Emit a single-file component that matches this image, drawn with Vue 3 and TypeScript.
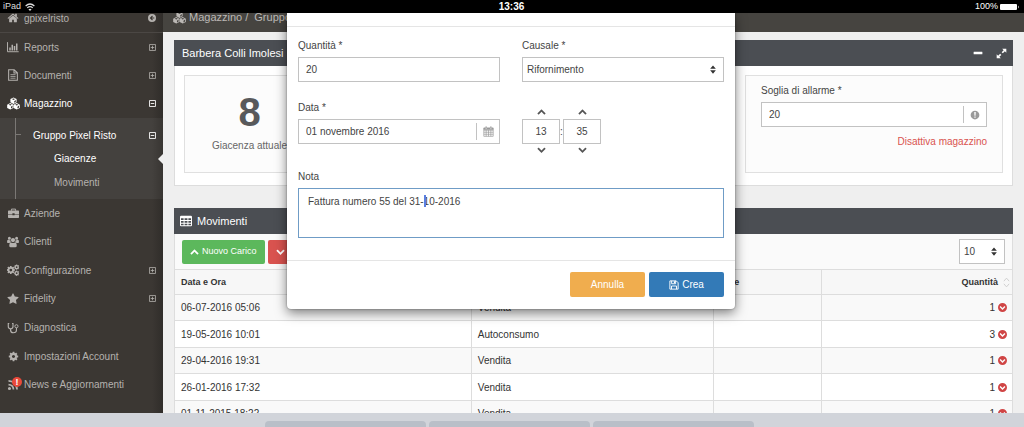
<script setup lang="ts">
import { h, ref } from 'vue'

interface Shape {
  d: string
  stroke?: number
  transform?: string
}
interface Glyph {
  box: string
  shapes: Shape[]
}

const cube = (x: number, y: number, r: number): string => {
  const w = r * 0.95
  const k = r / 2
  return (
    `M${x} ${y - r}L${x + w} ${y - k}V${y + k}L${x} ${y + r}L${x - w} ${y + k}V${y - k}Z` +
    `M${x} ${y - r + 1.2}L${x - w + 1.8} ${y - k}L${x} ${y - 0.9}L${x + w - 1.8} ${y - k}Z` +
    `M${x + 0.9} ${y + 0.6}V${y + r - 1.5}L${x + w - 1} ${y + k - 0.5}V${y - k + 1.1}Z`
  )
}

const cog =
  'M1152 896q0-106-75-181t-181-75-181 75-75 181 75 181 181 75 181-75 75-181zm512-109v222q0 12-8 23t-20 13l-185 28q-19 54-39 91 35 50 107 138 10 12 10 25t-9 23q-27 37-99 108t-94 71q-12 0-26-9l-138-108q-44 23-91 38-16 136-29 186-7 28-36 28h-222q-14 0-24.5-8.5t-11.5-21.5l-28-184q-49-16-90-37l-141 107q-10 9-25 9-14 0-25-11-126-114-165-168-7-10-7-23 0-12 8-23 15-21 51-66.5t54-70.5q-27-50-41-99l-183-27q-13-2-21-12.5t-8-23.5v-222q0-12 8-23t19-13l186-28q14-46 39-92-40-57-107-138-10-12-10-24 0-10 9-23 26-36 98.5-107.5t94.5-71.5q13 0 26 10l138 107q44-23 91-38 16-136 29-186 7-28 36-28h222q14 0 24.5 8.5t11.5 21.5l28 184q49 16 90 37l142-107q9-9 24-9 13 0 25 10 129 119 165 170 7 8 7 22 0 12-8 23-15 21-51 66.5t-54 70.5q26 50 41 98l183 28q13 2 21 12.5t8 23.5z'

const B = '0 0 1792 1792'
const S = '0 0 16 16'

const glyphs: Record<string, Glyph> = {
  home: { box: B, shapes: [{ d: 'M1472 992v480q0 26-19 45t-45 19h-384v-384h-256v384h-384q-26 0-45-19t-19-45v-480q0-1 .5-3t.5-3l575-474 575 474q1 2 1 6zm223-69l-62 74q-8 9-21 11h-3q-13 0-21-7l-692-577-692 577q-12 8-24 7-13-2-21-11l-62-74q-8-10-7-23.5t11-21.5l719-599q32-26 76-26t76 26l244 204v-195q0-14 9-23t23-9h192q14 0 23 9t9 23v408l219 182q10 8 11 21.5t-7 23.5z' }] },
  up: { box: B, shapes: [{ d: 'M1683 1331l-166 165q-19 19-45 19t-45-19l-531-531-531 531q-19 19-45 19t-45-19l-166-165q-19-19-19-45.5t19-45.5l742-741q19-19 45-19t45 19l742 741q19 19 19 45.5t-19 45.5z' }] },
  down: { box: B, shapes: [{ d: 'M1683 808l-742 741q-19 19-45 19t-45-19l-742-741q-19-19-19-45.5t19-45.5l166-165q19-19 45-19t45 19l531 531 531-531q19-19 45-19t45 19l166 165q19 19 19 45.5t-19 45.5z' }] },
  star: { box: B, shapes: [{ d: 'M1728 647q0 22-26 48l-363 354 86 500q1 7 1 20 0 21-10.5 35.5t-30.5 14.5q-19 0-40-12l-449-236-449 236q-22 12-40 12-21 0-31.5-14.5t-10.5-35.5q0-6 2-20l86-500-364-354q-25-27-25-48 0-37 56-46l502-73 225-455q19-41 49-41t49 41l225 455 502 73q56 9 56 46z' }] },
  cog: { box: B, shapes: [{ d: cog }] },
  cogs: {
    box: B,
    shapes: [
      { d: cog, transform: 'translate(-150 180) scale(.8)' },
      { d: cog, transform: 'translate(980 0) scale(.52)' },
      { d: cog, transform: 'translate(980 910) scale(.52)' },
    ],
  },
  chart: { box: S, shapes: [{ d: 'M.7 1.5V14.3H15.6', stroke: 1.3 }, { d: 'M3 8.5h2v4.2H3zM6 5h2v7.7H6zM9 6.8h2v5.9H9zM12 3.2h2v9.5h-2z' }] },
  doc: { box: S, shapes: [{ d: 'M2.2 1H9.6L13.8 5V15H2.2ZM9.3 1V5.4H13.8', stroke: 1.4 }, { d: 'M4.6 7.5h6.8M4.6 9.9h6.8M4.6 12.3h6.8', stroke: 1.1 }] },
  cubes: { box: S, shapes: [{ d: cube(8, 4.5, 4) + cube(4, 11.5, 4) + cube(12, 11.5, 4) }] },
  brief: { box: S, shapes: [{ d: 'M5 4V1.6H11V4', stroke: 1.4 }, { d: 'M0 4.6Q0 3.6 1 3.6H15Q16 3.6 16 4.6V8.6H9.6V7.8H6.4V8.6H0ZM0 9.5H6.4V10.6H9.6V9.5H16V13.6Q16 14.6 15 14.6H1Q0 14.6 0 13.6Z' }] },
  users: { box: S, shapes: [{ d: 'M8 2.6A2.8 2.8 0 1 1 8 8.2A2.8 2.8 0 1 1 8 2.6ZM3.2 1A2 2 0 1 1 3.2 5A2 2 0 1 1 3.2 1ZM12.8 1A2 2 0 1 1 12.8 5A2 2 0 1 1 12.8 1ZM0 8.4Q0 5 1.6 5.1Q3 6 4.6 5.5Q4.5 7.2 5.3 8.3Q3.9 8.4 3.3 9.2H1.3Q0 9.2 0 8.4ZM16 8.4Q16 5 14.4 5.1Q13 6 11.4 5.5Q11.5 7.2 10.7 8.3Q12.1 8.4 12.7 9.2H14.7Q16 9.2 16 8.4ZM3 12.9Q3 8.6 5.4 8.5Q8 10.3 10.6 8.5Q13 8.6 13 12.9Q13 15 11 15H5Q3 15 3 12.9Z' }] },
  steth: { box: S, shapes: [{ d: 'M3 2H1.7V6Q1.7 9 4.8 9Q8 9 8 6V2H6.7M4.8 9V11.2Q5 14.3 8.4 14.3Q12.6 14.3 12.6 11V7.6', stroke: 1.5 }, { d: 'M12.6 3.6A2.1 2.1 0 1 1 12.6 7.8A2.1 2.1 0 1 1 12.6 3.6Z', stroke: 1.3 }] },
  rss: { box: S, shapes: [{ d: 'M2 7.4A6.6 6.6 0 0 1 8.6 14M2 2.6A11.4 11.4 0 0 1 13.4 14', stroke: 2.4 }, { d: 'M3.3 10.5A2.1 2.1 0 1 1 3.3 14.7A2.1 2.1 0 1 1 3.3 10.5Z' }] },
  back: { box: S, shapes: [{ d: 'M8 0A8 8 0 1 1 8 16A8 8 0 1 1 8 0ZM8.2 3.2L3.4 8L8.2 12.8L9.8 11.2L7.8 9.2H12.6V6.8H7.8L9.8 4.8Z' }] },
  plus: { box: S, shapes: [{ d: 'M1.2 1.2H14.8V14.8H1.2ZM8 4V12M4 8H12', stroke: 1.8 }] },
  minus: { box: S, shapes: [{ d: 'M1.2 1.2H14.8V14.8H1.2ZM4 8H12', stroke: 2 }] },
  table: { box: S, shapes: [{ d: 'M1.5 1H14.5Q16 1 16 2.5V13.5Q16 15 14.5 15H1.5Q0 15 0 13.5V2.5Q0 1 1.5 1ZM1.3 4.3V6.7H4.8V4.3ZM6.1 4.3V6.7H9.9V4.3ZM11.2 4.3V6.7H14.7V4.3ZM1.3 7.9V10.3H4.8V7.9ZM6.1 7.9V10.3H9.9V7.9ZM11.2 7.9V10.3H14.7V7.9ZM1.3 11.5V13.8H4.8V11.5ZM6.1 11.5V13.8H9.9V11.5ZM11.2 11.5V13.8H14.7V11.5Z' }] },
  dash: { box: S, shapes: [{ d: 'M1.5 6H14.5Q15 6 15 6.5V9.5Q15 10 14.5 10H1.5Q1 10 1 9.5V6.5Q1 6 1.5 6Z' }] },
  expand: { box: S, shapes: [{ d: 'M9 1H15V7L12.9 4.9L10 7.8L8.2 6L11.1 3.1ZM7 15H1V9L3.1 11.1L6 8.2L7.8 10L4.9 12.9Z' }] },
  info: { box: S, shapes: [{ d: 'M8 1A7 7 0 1 1 8 15A7 7 0 1 1 8 1ZM6.8 3.2L7.1 9.2H8.9L9.2 3.2ZM7 10.3V12.4H9V10.3Z' }] },
  calendar: { box: S, shapes: [{ d: 'M1.2 3H14.8V15H1.2ZM1.2 6.2H14.8M1.2 9.1H14.8M1.2 12H14.8M4.6 6V15M8 6V15M11.4 6V15', stroke: 1 }, { d: 'M1 2.6H15V5.6H1ZM3.6 .6H5.6V4H3.6ZM10.4 .6H12.4V4H10.4Z' }] },
  save: { box: S, shapes: [{ d: 'M1.4 1.4H11.6L14.6 4.4V14.6H1.4ZM4 14.6V9.6H12V14.6M4.2 1.4V6H10.6V1.4', stroke: 1.5 }, { d: 'M7.8 2H9.6V5.2H7.8Z' }] },
  out: { box: S, shapes: [{ d: 'M8 0A8 8 0 1 1 8 16A8 8 0 1 1 8 0ZM8 12.4L13.2 7.2L11.4 5.4L8 8.8L4.6 5.4L2.8 7.2Z' }] },
  arrows: { box: '0 0 8 12', shapes: [{ d: 'M4 .5L7.8 5H.2ZM4 11.5L7.8 7H.2Z' }] },
  sort: { box: '0 0 8 12', shapes: [{ d: 'M1 4.5L4 1L7 4.5M1 7.5L4 11L7 7.5', stroke: 1 }] },
  wifi: { box: S, shapes: [{ d: 'M1 6.4Q8 0 15 6.4M3.6 9.4Q8 5.4 12.4 9.4', stroke: 2 }, { d: 'M8 14.4L5.4 11.6Q8 9.6 10.6 11.6Z' }] },
  battery: { box: '0 0 20 8', shapes: [{ d: 'M1 1H16Q17 1 17 2V6Q17 7 16 7H1Q0 7 0 6V2Q0 1 1 1ZM18 2.6Q19.4 4 18 5.4Z' }] },
}

const Icon = (props: { name: string; w: number; hgt?: number }) => {
  const g = glyphs[props.name]
  return h(
    'svg',
    { viewBox: g.box, width: props.w, height: props.hgt ?? props.w, 'aria-hidden': 'true', class: 'glyph' },
    g.shapes.map((s) =>
      h('path', {
        d: s.d,
        transform: s.transform,
        fill: s.stroke ? 'none' : 'currentColor',
        'fill-rule': 'evenodd',
        stroke: s.stroke ? 'currentColor' : undefined,
        'stroke-width': s.stroke,
      }),
    ),
  )
}
Icon.props = ['name', 'w', 'hgt']

interface NavItem {
  label: string
  icon: string
  toggle?: 'plus' | 'minus'
  active?: boolean
  alert?: boolean
}
const topNav: NavItem[] = [
  { label: 'Reports', icon: 'chart', toggle: 'plus' },
  { label: 'Documenti', icon: 'doc', toggle: 'plus' },
  { label: 'Magazzino', icon: 'cubes', toggle: 'minus', active: true },
]
const bottomNav: NavItem[] = [
  { label: 'Aziende', icon: 'brief' },
  { label: 'Clienti', icon: 'users' },
  { label: 'Configurazione', icon: 'cogs', toggle: 'plus' },
  { label: 'Fidelity', icon: 'star', toggle: 'plus' },
  { label: 'Diagnostica', icon: 'steth' },
  { label: 'Impostazioni Account', icon: 'cog' },
  { label: 'News e Aggiornamenti', icon: 'rss', alert: true },
]

const rows = [
  { date: '06-07-2016 05:06', cause: 'Vendita', qty: 1 },
  { date: '19-05-2016 10:01', cause: 'Autoconsumo', qty: 3 },
  { date: '29-04-2016 19:31', cause: 'Vendita', qty: 1 },
  { date: '26-01-2016 17:32', cause: 'Vendita', qty: 1 },
  { date: '01-11-2015 18:22', cause: 'Vendita', qty: 1 },
]

const threshold = ref('20')
const quantity = ref('20')
const cause = ref('Rifornimento')
const date = ref('01 novembre 2016')
const hour = ref('13')
const minute = ref('35')
const note = ref('Fattura numero 55 del 31-10-2016')
const pageSize = ref('10')
</script>

<template>
  <div class="screen">
    <header class="status">
      <span class="status-side">iPad <Icon name="wifi" :w="10" /></span>
      <strong>13:36</strong>
      <span class="status-side end">100% <Icon name="battery" :w="20" :hgt="8" /></span>
    </header>

    <div class="view">
      <nav class="sidebar">
        <a href="#" class="nav-item account">
          <span class="nav-icon"><Icon name="home" :w="12" /></span>
          <span class="nav-label">gpixelristo</span>
          <Icon name="back" :w="8" />
        </a>
        <div class="nav-group top">
          <a v-for="n in topNav" :key="n.label" href="#" class="nav-item" :class="{ active: n.active }">
            <span class="nav-icon"><Icon :name="n.icon" :w="n.icon === 'cubes' ? 13 : 12" /></span>
            <span class="nav-label">{{ n.label }}</span>
            <Icon v-if="n.toggle" :name="n.toggle" :w="7" />
          </a>
        </div>
        <div class="subnav">
          <a href="#" class="sub-item level1 active"><span class="nav-label">Gruppo Pixel Risto</span><Icon name="minus" :w="7" /></a>
          <a href="#" class="sub-item level2 active current">Giacenze</a>
          <a href="#" class="sub-item level2">Movimenti</a>
        </div>
        <div class="nav-group bottom">
          <a v-for="n in bottomNav" :key="n.label" href="#" class="nav-item">
            <span class="nav-icon">
              <Icon :name="n.icon" :w="n.icon === 'brief' || n.icon === 'cog' ? 11 : 12" />
              <span v-if="n.alert" class="alert">!</span>
            </span>
            <span class="nav-label">{{ n.label }}</span>
            <Icon v-if="n.toggle" :name="n.toggle" :w="7" />
          </a>
        </div>
      </nav>

      <main class="main">
        <div class="crumbs">
          <Icon name="cubes" :w="13" />
          <span>Magazzino /</span>
          <span class="crumb-last">Gruppo Pixel Risto</span>
        </div>

        <section class="panel">
          <div class="panel-head">
            <h2 class="plain">Barbera Colli Imolesi</h2>
            <button type="button" class="tool" aria-label="Riduci"><Icon name="dash" :w="10" /></button>
            <button type="button" class="tool" aria-label="Espandi"><Icon name="expand" :w="11" /></button>
          </div>
          <div class="cards">
            <div class="card stock">
              <strong>8</strong>
              <span>Giacenza attuale</span>
            </div>
            <div class="card threshold">
              <label for="threshold">Soglia di allarme *</label>
              <div class="field">
                <input id="threshold" v-model="threshold" type="text" />
                <span class="addon"><Icon name="info" :w="10" /></span>
              </div>
              <a href="#" class="danger">Disattiva magazzino</a>
            </div>
          </div>
        </section>

        <section class="panel">
          <div class="panel-head">
            <Icon name="table" :w="12" />
            <h2>Movimenti</h2>
          </div>
          <div class="toolbar">
            <button type="button" class="btn green"><Icon name="up" :w="9" />Nuovo Carico</button>
            <button type="button" class="btn red"><Icon name="down" :w="9" />Nuovo Scarico</button>
            <div class="select small">
              <select v-model="pageSize" aria-label="Righe per pagina"><option>10</option></select>
              <span class="select-arrows"><Icon name="arrows" :w="6" :hgt="9" /></span>
            </div>
          </div>
          <table>
            <colgroup><col class="c1" /><col class="c2" /><col class="c3" /><col /></colgroup>
            <thead>
              <tr>
                <th>Data e Ora</th>
                <th>Causale</th>
                <th>Note</th>
                <th><span class="qty head">Quantità <i><Icon name="sort" :w="7" :hgt="11" /></i></span></th>
              </tr>
            </thead>
            <tbody>
              <tr v-for="r in rows" :key="r.date">
                <td>{{ r.date }}</td>
                <td>{{ r.cause }}</td>
                <td></td>
                <td><span class="qty">{{ r.qty }} <b><Icon name="out" :w="9" /></b></span></td>
              </tr>
            </tbody>
          </table>
        </section>
      </main>

      <div class="overlay">
        <form class="modal" role="dialog" aria-label="Nuovo Carico" @submit.prevent>
          <div class="modal-head"></div>
          <div class="modal-body">
            <div>
              <label for="qty">Quantità *</label>
              <div class="field"><input id="qty" v-model="quantity" type="text" /></div>
            </div>
            <div>
              <label for="cause">Causale *</label>
              <div class="select">
                <select id="cause" v-model="cause"><option>Rifornimento</option></select>
                <span class="select-arrows"><Icon name="arrows" :w="6" :hgt="9" /></span>
              </div>
            </div>
            <div>
              <label for="date">Data *</label>
              <div class="field">
                <input id="date" v-model="date" type="text" />
                <button type="button" class="addon" aria-label="Apri calendario"><Icon name="calendar" :w="11" /></button>
              </div>
            </div>
            <div class="time">
              <div class="spin">
                <button type="button" aria-label="Ora successiva"><Icon name="up" :w="9" /></button>
                <input v-model="hour" type="text" aria-label="Ora" />
                <button type="button" aria-label="Ora precedente"><Icon name="down" :w="9" /></button>
              </div>
              <span class="colon">:</span>
              <div class="spin">
                <button type="button" aria-label="Minuto successivo"><Icon name="up" :w="9" /></button>
                <input v-model="minute" type="text" aria-label="Minuti" />
                <button type="button" aria-label="Minuto precedente"><Icon name="down" :w="9" /></button>
              </div>
            </div>
            <div class="wide">
              <label for="note">Nota</label>
              <div class="note">
                <textarea id="note" v-model="note"></textarea>
                <span class="caret"></span>
              </div>
            </div>
          </div>
          <div class="modal-foot">
            <button type="button" class="action orange">Annulla</button>
            <button type="submit" class="action blue"><Icon name="save" :w="10" />Crea</button>
          </div>
        </form>
      </div>
    </div>

    <footer class="keyboard"><span></span><span></span><span></span></footer>
  </div>
</template>

<style>
body {
  margin: 0;
  overflow: hidden;
}
.glyph {
  display: block;
  flex: none;
}
</style>

<style scoped>
* {
  box-sizing: border-box;
}
.screen {
  display: flex;
  flex-direction: column;
  height: 100vh;
  overflow: hidden;
  background: #efefef;
  color: #444;
  font: 10px/13px "Liberation Sans", Arial, sans-serif;
}
button,
input,
select,
textarea {
  margin: 0;
  padding: 0;
  border: 0;
  border-radius: 0;
  outline: 0;
  background: none;
  color: inherit;
  font: inherit;
}
a {
  color: inherit;
  text-decoration: none;
}
.status {
  display: flex;
  align-items: center;
  flex: none;
  height: 13px;
  padding: 0 4px 0 3px;
  background: #000;
  color: #fff;
}
.status-side {
  display: flex;
  flex: 1;
  align-items: center;
  gap: 4px;
  color: #ddd;
  font-size: 9px;
}
.status-side.end {
  justify-content: flex-end;
  gap: 2px;
  color: #fff;
}
.view {
  position: relative;
  display: flex;
  flex: 1;
  min-height: 0;
  overflow: hidden;
}

/* Sidebar */
.sidebar {
  flex: none;
  width: 163px;
  margin-top: -9px;
  background: linear-gradient(to right, #3b3733 152px, #302d2a);
  color: #b5b2af;
}
.nav-item {
  display: flex;
  align-items: center;
  padding: 0 7px 0 6px;
}
.account {
  height: 29px;
  border-bottom: 1px solid #4b4744;
}
.nav-icon {
  position: relative;
  display: flex;
  justify-content: center;
  width: 14px;
  margin-right: 4px;
}
.nav-label {
  flex: 1;
}
.nav-group {
  display: grid;
  grid-auto-rows: 1fr;
}
.nav-group.top {
  height: 85px;
}
.nav-group.bottom {
  height: 200px;
}
.active {
  color: #fff;
}
.subnav {
  position: relative;
  display: grid;
  grid-auto-rows: 1fr;
  height: 81px;
  padding: 6px 0 5px;
  background: linear-gradient(to right, #44413e 152px, #383532);
}
.subnav::before {
  content: "";
  position: absolute;
  top: 0;
  bottom: 0;
  left: 15px;
  border-left: 1px solid #7b7875;
}
.subnav::after {
  content: "";
  position: absolute;
  top: 16px;
  left: 16px;
  width: 5px;
  border-top: 1px solid #7b7875;
}
.sub-item {
  position: relative;
  display: flex;
  align-items: center;
  padding-right: 7px;
}
.level1 {
  padding-left: 33px;
}
.level2 {
  padding-left: 54px;
}
.current::after {
  content: "";
  position: absolute;
  right: 0;
  border: 5px solid transparent;
  border-left-width: 0;
  border-right-color: #efefef;
}
.alert {
  position: absolute;
  top: -2px;
  left: 6px;
  width: 10px;
  height: 10px;
  border-radius: 50%;
  background: #e8493a;
  color: #fff;
  font-size: 9px;
  font-weight: bold;
  line-height: 10px;
  text-align: center;
}

/* Page */
.main {
  flex: 1;
  min-width: 0;
  margin-top: -9px;
}
.crumbs {
  display: flex;
  align-items: center;
  gap: 3px;
  height: 28px;
  padding: 0 10px 2px;
  background: #464440;
  color: #bbb8b5;
  font-size: 11px;
}
.crumb-last {
  margin-left: 3px;
}
.panel {
  margin: 8px 11px 22px;
  border: 1px solid #ddd;
  border-top: 0;
  background: #fff;
}
.panel-head {
  display: flex;
  align-items: center;
  gap: 5px;
  height: 26px;
  margin: 0 -1px;
  padding: 0 6px;
  background: #4b4e53;
  color: #fff;
}
.panel-head h2 {
  flex: 1;
  margin: 0;
  font-size: 11px;
  font-weight: normal;
}
.panel-head .plain {
  padding-left: 2px;
}
.panel-head h2 + .tool {
  margin-right: 8px;
}
.cards {
  display: flex;
  justify-content: space-between;
  padding: 9px 9px 12px;
}
.card {
  height: 98px;
  border: 1px solid #e0e0e0;
  background: #fcfcfc;
}
.stock {
  display: flex;
  flex-direction: column;
  align-items: center;
  width: 131px;
  padding-top: 16px;
  color: #666;
  white-space: nowrap;
}
.stock strong {
  margin-bottom: 7px;
  color: #58595b;
  font-size: 40px;
  line-height: 40px;
}
.threshold {
  width: 258px;
  padding: 8px 15px;
}
label {
  display: block;
  margin-bottom: 5px;
}
.threshold .danger {
  display: block;
  margin-top: 8px;
  color: #d9534f;
  font-size: 10px;
  text-align: right;
}
.field {
  display: flex;
  align-items: center;
  height: 25px;
  border: 1px solid #c2c2c2;
  background: #fff;
}
.field input {
  flex: 1;
  min-width: 0;
  height: 100%;
  padding: 0 7px;
}
.addon {
  display: flex;
  align-items: center;
  justify-content: center;
  width: 23px;
  height: 17px;
  border-left: 1px solid #c2c2c2;
  color: #999;
}
.toolbar {
  display: flex;
  align-items: center;
  gap: 3px;
  height: 35px;
  padding: 0 7px;
  background: #fafafa;
}
.btn {
  display: flex;
  align-items: center;
  gap: 3px;
  height: 24px;
  padding: 0 8px;
  border-radius: 2px;
  color: #fff;
  font-size: 9px;
}
.green {
  background: #5cb85c;
}
.red {
  background: #d9534f;
}
.select {
  position: relative;
  height: 25px;
}
.select select {
  width: 100%;
  height: 100%;
  padding-left: 4px;
  border: 1px solid #c2c2c2;
  background: #fff;
  appearance: none;
}
.select-arrows {
  position: absolute;
  top: 8px;
  right: 8px;
  color: #333;
  pointer-events: none;
}
.select.small {
  width: 46px;
  margin-left: auto;
}
table {
  width: 100%;
  height: 157px;
  border-collapse: collapse;
  table-layout: fixed;
  color: #333;
}
.c1 {
  width: 35.4%;
}
.c2 {
  width: 28.9%;
}
.c3 {
  width: 13%;
}
th,
td {
  padding: 0 5px 0 6px;
  border-top: 1px solid #ddd;
  border-left: 1px solid #ddd;
  text-align: left;
}
th {
  height: 25px;
  border-left: 0;
  background: #f7f7f7;
  font-size: 9px;
}
th:last-child {
  border-left: 1px solid #ddd;
}
td:first-child {
  border-left: 0;
}
tbody tr:nth-child(odd) {
  background: #f9f9f9;
}
.qty {
  display: flex;
  align-items: center;
  justify-content: flex-end;
  gap: 3px;
}
.qty b {
  color: #d04545;
}
.qty i {
  color: #ccc;
}
.qty.head {
  gap: 5px;
  margin-right: -3px;
}

/* Dialog */
.overlay {
  position: absolute;
  inset: 0 2px 0 0;
  display: flex;
  align-items: flex-start;
  justify-content: center;
}
.modal {
  width: 448px;
  max-width: 100%;
  border-radius: 0 0 4px 4px;
  background: #fff;
  box-shadow: 0 4px 12px rgba(0, 0, 0, 0.5), 0 0 2px rgba(0, 0, 0, 0.4);
}
.modal-head {
  height: 14px;
  border-bottom: 1px solid #e5e5e5;
}
.modal-body {
  display: grid;
  grid-template-columns: 1fr 1fr;
  column-gap: 22px;
  padding: 12px 11px 22px;
}
.modal-body > :nth-child(-n + 2) {
  margin-bottom: 19px;
}
.time {
  display: flex;
  align-items: center;
  margin: 5px 0 13px;
}
.spin {
  display: flex;
  flex-direction: column;
  align-items: center;
  width: 38px;
}
.spin button {
  height: 13px;
  padding: 0 8px 3px;
  color: #555;
}
.spin button:last-child {
  padding-top: 1px;
}
.spin input {
  width: 100%;
  height: 25px;
  border: 1px solid #c2c2c2;
  text-align: center;
}
.colon {
  width: 3px;
}
.wide {
  grid-column: 1 / -1;
}
.note {
  position: relative;
  display: flex;
}
.note textarea {
  width: 100%;
  height: 50px;
  padding: 6px 9px;
  border: 1px solid #6f9cc6;
  resize: none;
}
.caret {
  position: absolute;
  top: 7px;
  left: 126px;
  height: 12px;
  border-left: 2px solid #5b7fe0;
}
.modal-foot {
  display: flex;
  justify-content: flex-end;
  gap: 4px;
  padding: 11px 11px 12px;
  border-top: 1px solid #e5e5e5;
}
.action {
  display: flex;
  align-items: center;
  justify-content: center;
  gap: 3px;
  width: 75px;
  height: 25px;
  border-radius: 2px;
  color: #fff;
}
.orange {
  background: #f0ad4e;
}
.blue {
  background: #337ab7;
}

.keyboard {
  display: flex;
  flex: none;
  justify-content: center;
  gap: 3px;
  height: 14px;
  padding: 8px 6px 0 0;
  background: #d1d4da;
}
.keyboard span {
  width: 161px;
  border-radius: 4px 4px 0 0;
  background: #b9bfc8;
}
</style>
